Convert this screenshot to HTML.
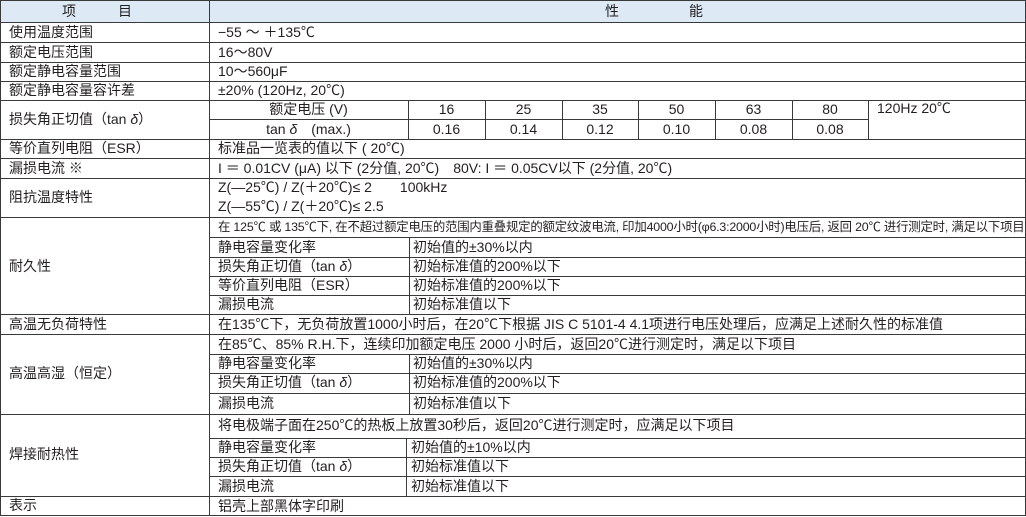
<!DOCTYPE html><html><head><meta charset="utf-8"><style>
body{margin:0;width:1026px;height:517px;background:#fff;position:relative;overflow:hidden;font-family:"Liberation Sans","Noto Sans CJK SC",sans-serif;color:#231f20;font-size:14px}
.h{position:absolute;height:1px;background:#3a3a3a}
.v{position:absolute;width:1px;background:#3a3a3a}
.t{position:absolute;white-space:nowrap;line-height:19px}
.c{text-align:center}
</style></head><body>
<div style="position:absolute;left:0;top:0;width:1026px;height:22px;background:#dde9f5"></div>
<div class="h" style="left:0;width:1026px;top:0"></div>
<div class="h" style="left:0;width:1026px;top:22px"></div>
<div class="h" style="left:0;width:1026px;top:42px"></div>
<div class="h" style="left:0;width:1026px;top:62px"></div>
<div class="h" style="left:0;width:1026px;top:81px"></div>
<div class="h" style="left:0;width:1026px;top:100px"></div>
<div class="h" style="left:0;width:1026px;top:139px"></div>
<div class="h" style="left:0;width:1026px;top:158px"></div>
<div class="h" style="left:0;width:1026px;top:178px"></div>
<div class="h" style="left:0;width:1026px;top:217px"></div>
<div class="h" style="left:0;width:1026px;top:314px"></div>
<div class="h" style="left:0;width:1026px;top:334px"></div>
<div class="h" style="left:0;width:1026px;top:414px"></div>
<div class="h" style="left:0;width:1026px;top:496px"></div>
<div class="h" style="left:0;width:1026px;top:515px"></div>
<div class="h" style="left:209px;width:659px;top:119px"></div>
<div class="h" style="left:209px;width:817px;top:237px"></div>
<div class="h" style="left:209px;width:817px;top:257px"></div>
<div class="h" style="left:209px;width:817px;top:276px"></div>
<div class="h" style="left:209px;width:817px;top:295px"></div>
<div class="h" style="left:209px;width:817px;top:354px"></div>
<div class="h" style="left:209px;width:817px;top:373px"></div>
<div class="h" style="left:209px;width:817px;top:393px"></div>
<div class="h" style="left:209px;width:817px;top:438px"></div>
<div class="h" style="left:209px;width:817px;top:457px"></div>
<div class="h" style="left:209px;width:817px;top:476px"></div>
<div class="v" style="left:0;top:0;height:516px"></div>
<div class="v" style="left:1025px;top:0;height:516px"></div>
<div class="v" style="left:209px;top:0;height:516px"></div>
<div class="v" style="left:408px;top:100px;height:39px"></div>
<div class="v" style="left:485px;top:100px;height:39px"></div>
<div class="v" style="left:562px;top:100px;height:39px"></div>
<div class="v" style="left:638px;top:100px;height:39px"></div>
<div class="v" style="left:715px;top:100px;height:39px"></div>
<div class="v" style="left:792px;top:100px;height:39px"></div>
<div class="v" style="left:868px;top:100px;height:39px"></div>
<div class="v" style="left:409px;top:237px;height:77px"></div>
<div class="v" style="left:409px;top:354px;height:60px"></div>
<div class="v" style="left:406px;top:438px;height:58px"></div>

<div class="t" style="left:62px;top:2px">项　　　目</div>
<div class="t" style="left:605px;top:2px">性　　　　　能</div>

<div class="t" style="left:9px;top:23px">使用温度范围</div>
<div class="t" style="left:218px;top:23px">−55 ～ ＋135℃</div>
<div class="t" style="left:9px;top:43px">额定电压范围</div>
<div class="t" style="left:218px;top:43px">16～80V</div>
<div class="t" style="left:9px;top:62px">额定静电容量范围</div>
<div class="t" style="left:218px;top:62px">10～560μF</div>
<div class="t" style="left:9px;top:81px">额定静电容量容许差</div>
<div class="t" style="left:218px;top:81px">±20% (120Hz, 20℃)</div>
<div class="t" style="left:9px;top:110px">损失角正切值（tan <i>δ</i>）</div>
<div class="t c" style="left:209px;width:199px;top:100px">额定电压 (V)</div>
<div class="t c" style="left:209px;width:199px;top:120px">tan <i>δ</i>　(max.)</div>
<div class="t c" style="left:408px;width:77px;top:100px">16</div><div class="t c" style="left:408px;width:77px;top:120px">0.16</div>
<div class="t c" style="left:485px;width:77px;top:100px">25</div><div class="t c" style="left:485px;width:77px;top:120px">0.14</div>
<div class="t c" style="left:562px;width:76px;top:100px">35</div><div class="t c" style="left:562px;width:76px;top:120px">0.12</div>
<div class="t c" style="left:638px;width:77px;top:100px">50</div><div class="t c" style="left:638px;width:77px;top:120px">0.10</div>
<div class="t c" style="left:715px;width:77px;top:100px">63</div><div class="t c" style="left:715px;width:77px;top:120px">0.08</div>
<div class="t c" style="left:792px;width:76px;top:100px">80</div><div class="t c" style="left:792px;width:76px;top:120px">0.08</div>
<div class="t" style="left:877px;top:99px">120Hz 20℃</div>
<div class="t" style="left:9px;top:139px">等价直列电阻（ESR）</div>
<div class="t" style="left:218px;top:139px">标准品一览表的值以下 ( 20℃)</div>
<div class="t" style="left:9px;top:159px">漏损电流 ※</div>
<div class="t" style="left:218px;top:159px">I ＝ 0.01CV (μA) 以下 (2分值, 20℃)　80V: I ＝ 0.05CV以下 (2分值, 20℃)</div>
<div class="t" style="left:9px;top:188px">阻抗温度特性</div>
<div class="t" style="left:218px;top:178px">Z(—25℃) / Z(＋20℃)≤ 2　　100kHz</div>
<div class="t" style="left:218px;top:197px">Z(—55℃) / Z(＋20℃)≤ 2.5</div>

<div class="t" style="left:218px;top:218px;font-size:12.4px;letter-spacing:-0.2px">在 125℃ 或 135℃下, 在不超过额定电压的范围内重叠规定的额定纹波电流, 印加4000小时(φ6.3:2000小时)电压后, 返回 20℃ 进行测定时, 满足以下项目</div>
<div class="t" style="left:9px;top:257px">耐久性</div>
<div class="t" style="left:218px;top:238px">静电容量变化率</div><div class="t" style="left:413px;top:238px">初始值的±30%以内</div>
<div class="t" style="left:218px;top:257px">损失角正切值（tan <i>δ</i>）</div><div class="t" style="left:413px;top:257px">初始标准值的200%以下</div>
<div class="t" style="left:218px;top:276px">等价直列电阻（ESR）</div><div class="t" style="left:413px;top:276px">初始标准值的200%以下</div>
<div class="t" style="left:218px;top:295px">漏损电流</div><div class="t" style="left:413px;top:295px">初始标准值以下</div>
<div class="t" style="left:9px;top:315px">高温无负荷特性</div>
<div class="t" style="left:218px;top:315px">在135℃下，无负荷放置1000小时后，在20℃下根据 JIS C 5101-4 4.1项进行电压处理后，应满足上述耐久性的标准值</div>
<div class="t" style="left:218px;top:335px">在85℃、85% R.H.下，连续印加额定电压 2000 小时后，返回20℃进行测定时，满足以下项目</div>
<div class="t" style="left:9px;top:364px">高温高湿（恒定）</div>
<div class="t" style="left:218px;top:354px">静电容量变化率</div><div class="t" style="left:413px;top:354px">初始值的±30%以内</div>
<div class="t" style="left:218px;top:373px">损失角正切值（tan <i>δ</i>）</div><div class="t" style="left:413px;top:373px">初始标准值的200%以下</div>
<div class="t" style="left:218px;top:394px">漏损电流</div><div class="t" style="left:413px;top:394px">初始标准值以下</div>
<div class="t" style="left:218px;top:416px">将电极端子面在250℃的热板上放置30秒后，返回20℃进行测定时，应满足以下项目</div>
<div class="t" style="left:9px;top:445px">焊接耐热性</div>
<div class="t" style="left:218px;top:438px">静电容量变化率</div><div class="t" style="left:411px;top:438px">初始值的±10%以内</div>
<div class="t" style="left:218px;top:457px">损失角正切值（tan <i>δ</i>）</div><div class="t" style="left:411px;top:457px">初始标准值以下</div>
<div class="t" style="left:218px;top:477px">漏损电流</div><div class="t" style="left:411px;top:477px">初始标准值以下</div>
<div class="t" style="left:9px;top:496px">表示</div>
<div class="t" style="left:218px;top:497px">铝壳上部黑体字印刷</div>
</body></html>
